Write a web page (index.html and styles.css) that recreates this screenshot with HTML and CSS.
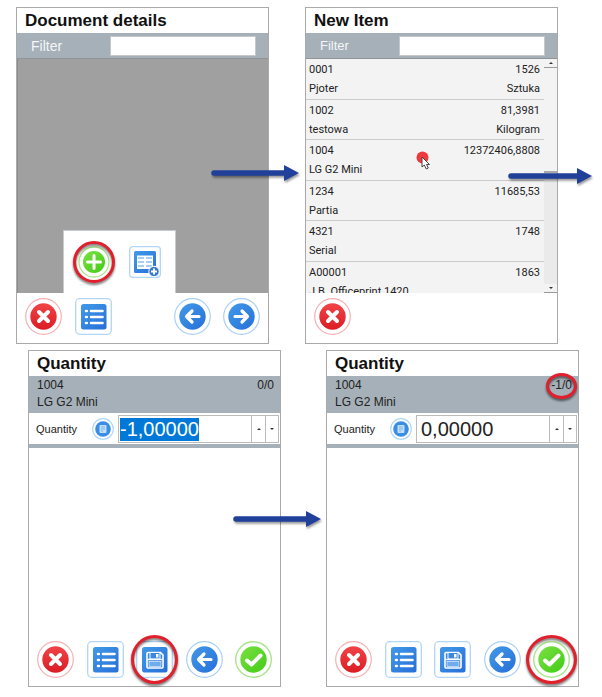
FILE: index.html
```html
<!DOCTYPE html>
<html lang="en">
<head>
<meta charset="utf-8">
<title>Adding an item to a document</title>
<link rel="stylesheet" href="styles.css">
</head>
<body>
<svg class="defs" aria-hidden="true">
  <defs>
    <linearGradient id="red" x1="0" y1="0" x2="0" y2="1"><stop offset="0" stop-color="#f04448"/><stop offset="1" stop-color="#dc1c24"/></linearGradient>
    <linearGradient id="blue" x1="0" y1="0" x2="1" y2="1"><stop offset="0" stop-color="#429ae8"/><stop offset="1" stop-color="#266fd8"/></linearGradient>
    <linearGradient id="green" x1="0" y1="0" x2="1" y2="1"><stop offset="0" stop-color="#7ce044"/><stop offset="1" stop-color="#40cc14"/></linearGradient>
    <symbol id="close" viewBox="0 0 37 37">
      <circle cx="18.500" cy="18.500" r="17.800" fill="#fff" stroke="#f5b0b2" stroke-width="1.200"/>
      <circle cx="18.500" cy="18.500" r="13.200" fill="url(#red)"/>
      <path d="M14 14l9 9M23 14l-9 9" stroke="#fff" stroke-width="4" stroke-linecap="round"/>
    </symbol>
    <symbol id="list" viewBox="0 0 37 37">
      <rect x=".7" y=".7" width="35.600" height="35.600" rx="4" fill="#fff" stroke="#b2d6f6" stroke-width="1.300"/>
      <rect x="6" y="6" width="25.500" height="25.500" rx="2.500" fill="url(#blue)"/>
      <path d="M16 13h11.500M16 19h11.500M16 25h11.500" stroke="#fff" stroke-width="2.600" stroke-linecap="round"/>
      <path d="M11 13h.8M11 19h.8M11 25h.8" stroke="#fff" stroke-width="2.600" stroke-linecap="round"/>
    </symbol>
    <symbol id="save" viewBox="0 0 37 37">
      <rect x=".7" y=".7" width="35.600" height="35.600" rx="4" fill="#fff" stroke="#b2d6f6" stroke-width="1.300"/>
      <rect x="6" y="6" width="25.500" height="25.500" rx="2.500" fill="url(#blue)"/>
      <path d="M12 11.500h12.500l2.500 2.500v12a1 1 0 0 1-1 1H12a1 1 0 0 1-1-1V12.500a1 1 0 0 1 1-1z" fill="none" stroke="#fff" stroke-width="1.600"/>
      <path d="M14 11.500h10v6.500h-10z" fill="#3a88e0" stroke="#fff"/>
      <path d="M20 13h2.500v3.500H20z" fill="#fff"/>
      <path d="M11.500 18.500h15" stroke="#fff" stroke-width="1.500"/>
      <rect x="13" y="20.500" width="12" height="5" fill="#6eacec" stroke="#fff" stroke-width=".6"/>
    </symbol>
    <symbol id="back" viewBox="0 0 37 37">
      <circle cx="18.500" cy="18.500" r="17.800" fill="#fff" stroke="#a9cff4" stroke-width="1.200"/>
      <circle cx="18.500" cy="18.500" r="13.200" fill="url(#blue)"/>
      <path d="M25 18.500H12.500M18 13l-5.500 5.500 5.500 5.500" fill="none" stroke="#fff" stroke-width="3.200" stroke-linecap="round" stroke-linejoin="round"/>
    </symbol>
    <symbol id="forward" viewBox="0 0 37 37">
      <circle cx="18.500" cy="18.500" r="17.800" fill="#fff" stroke="#a9cff4" stroke-width="1.200"/>
      <circle cx="18.500" cy="18.500" r="13.200" fill="url(#blue)"/>
      <path d="M12 18.500h12.500M19 13l5.500 5.500-5.500 5.500" fill="none" stroke="#fff" stroke-width="3.200" stroke-linecap="round" stroke-linejoin="round"/>
    </symbol>
    <symbol id="accept" viewBox="0 0 37 37">
      <circle cx="18.500" cy="18.500" r="17.800" fill="#fff" stroke="#a8e68c" stroke-width="1.400"/>
      <circle cx="18.500" cy="18.500" r="13.200" fill="url(#green)"/>
      <path d="M12 19.500l4.500 4 9-9" fill="none" stroke="#fff" stroke-width="4" stroke-linecap="round" stroke-linejoin="round"/>
    </symbol>
    <symbol id="add" viewBox="0 0 32 32">
      <circle cx="16" cy="16" r="15" fill="#fff" stroke="#a8e68c" stroke-width="1.300"/>
      <circle cx="16" cy="16" r="11" fill="url(#green)"/>
      <path d="M16 9.500v13M9.500 16h13" stroke="#fff" stroke-width="3" stroke-linecap="round"/>
    </symbol>
    <symbol id="sheet" viewBox="0 0 32 32">
      <rect x=".7" y=".7" width="30.600" height="30.600" rx="3" fill="#fff" stroke="#b2d6f6" stroke-width="1.300"/>
      <path d="M6.500 5h19A1.500 1.500 0 0 1 27 6.500V27H6.500A1.500 1.500 0 0 1 5 25.500v-19A1.500 1.500 0 0 1 6.500 5z" fill="url(#blue)"/>
      <path d="M8 9.500h16V23H8z" fill="#fff"/>
      <path d="M9 12h6M17 12h6M9 16h6M17 16h6M9 20h6M17 20h6" stroke="#8dbdf0" stroke-width="1.500"/>
      <circle cx="25" cy="25.500" r="5.200" fill="#2f78cc" stroke="#fff"/>
      <path d="M25 22.500v6M22 25.500h6" stroke="#fff" stroke-width="2"/>
    </symbol>
    <symbol id="pad" viewBox="0 0 22 22">
      <circle cx="11" cy="11" r="10.300" fill="#fff" stroke="#b2d8f8" stroke-width="1.200"/>
      <circle cx="11" cy="11" r="7.800" fill="#3a8de4"/>
      <rect x="7.500" y="7" width="7" height="8" rx="1" fill="#c4dff8"/>
      <path d="M9 9h4M9 11h4M9 13h2" stroke="#6aaaea" stroke-width=".8"/>
    </symbol>
    <symbol id="arrow" viewBox="0 0 88 18">
      <path d="M3 9h71" stroke="#21409a" stroke-width="5.500" stroke-linecap="round"/>
      <path d="M73 1l15 8-15 8z" fill="#21409a"/>
    </symbol>
    <symbol id="arrow-short" viewBox="0 0 84 18">
      <path d="M3 9h67" stroke="#21409a" stroke-width="5.500" stroke-linecap="round"/>
      <path d="M69 1l15 8-15 8z" fill="#21409a"/>
    </symbol>
  </defs>
</svg>

<main>
  <div class="row row-top">
    <section class="panel">
      <h2>Document details</h2>
      <div class="filter">
        <label for="doc-filter">Filter</label>
        <input id="doc-filter" type="text">
      </div>
      <div class="body empty">
        <div class="popup">
          <button type="button" aria-label="Add item"><svg class="icon-small"><use href="#add"/></svg><span class="ring ring-add"></span></button>
          <button type="button" aria-label="Add from list"><svg class="icon-small"><use href="#sheet"/></svg></button>
        </div>
      </div>
      <div class="toolbar">
        <button type="button" aria-label="Cancel"><svg class="icon"><use href="#close"/></svg></button>
        <button type="button" aria-label="Menu"><svg class="icon"><use href="#list"/></svg></button>
        <button type="button" class="fourth" aria-label="Back"><svg class="icon"><use href="#back"/></svg></button>
        <button type="button" aria-label="Next"><svg class="icon"><use href="#forward"/></svg></button>
      </div>
      <svg class="arrow arrow-first"><use href="#arrow"/></svg>
    </section>

    <section class="panel">
      <h2>New Item</h2>
      <div class="filter filter-small">
        <label for="item-filter">Filter</label>
        <input id="item-filter" type="text">
      </div>
      <div class="body items">
        <ul>
          <li><span>0001</span><span>1526</span><span>Pjoter</span><span>Sztuka</span></li>
          <li><span>1002</span><span>81,3981</span><span>testowa</span><span>Kilogram</span></li>
          <li><span>1004</span><span>12372406,8808</span><span>LG G2 Mini</span>
            <svg class="pointer" viewBox="0 0 16 20"><circle cx="6.500" cy="6.500" r="6" fill="#f0393f"/><path d="M6 6v10l2.300-2 2 4 2-1-1.800-3.500h3z" fill="#fff" stroke="#444"/></svg></li>
          <li><span>1234</span><span>11685,53</span><span>Partia</span></li>
          <li><span>4321</span><span>1748</span><span>Serial</span></li>
          <li><span>A00001</span><span>1863</span><span>J.B. Officeprint 1420</span></li>
        </ul>
        <div class="scrollbar">
          <button type="button" aria-label="Scroll up"><i class="up"></i></button>
          <div class="thumb"></div>
          <button type="button" aria-label="Scroll down"><i class="down"></i></button>
        </div>
      </div>
      <div class="toolbar">
        <button type="button" aria-label="Cancel"><svg class="icon"><use href="#close"/></svg></button>
      </div>
      <svg class="arrow arrow-second"><use href="#arrow-short"/></svg>
    </section>
  </div>

  <div class="row row-bottom">
    <section class="panel">
      <h2>Quantity</h2>
      <div class="info"><span>1004</span><span>0/0</span><span>LG G2 Mini</span></div>
      <div class="quantity">
        <label for="qty-before">Quantity</label>
        <button type="button" aria-label="Keypad"><svg class="icon-pad"><use href="#pad"/></svg></button>
        <div class="stepper">
          <input id="qty-before" type="text" value="-1,00000">
          <button type="button" aria-label="Increase"><i class="up"></i></button>
          <button type="button" aria-label="Decrease"><i class="down"></i></button>
        </div>
      </div>
      <div class="body"></div>
      <div class="toolbar">
        <button type="button" aria-label="Cancel"><svg class="icon"><use href="#close"/></svg></button>
        <button type="button" aria-label="Menu"><svg class="icon"><use href="#list"/></svg></button>
        <button type="button" aria-label="Save"><svg class="icon"><use href="#save"/></svg><span class="ring ring-save"></span></button>
        <button type="button" aria-label="Back"><svg class="icon"><use href="#back"/></svg></button>
        <button type="button" aria-label="Accept"><svg class="icon"><use href="#accept"/></svg></button>
      </div>
      <svg class="arrow arrow-third"><use href="#arrow"/></svg>
    </section>

    <section class="panel">
      <h2>Quantity</h2>
      <div class="info"><span>1004</span><span class="marked">-1/0<span class="ring ring-count"></span></span><span>LG G2 Mini</span></div>
      <div class="quantity">
        <label for="qty-after">Quantity</label>
        <button type="button" aria-label="Keypad"><svg class="icon-pad"><use href="#pad"/></svg></button>
        <div class="stepper">
          <input id="qty-after" type="text" value="0,00000">
          <button type="button" aria-label="Increase"><i class="up"></i></button>
          <button type="button" aria-label="Decrease"><i class="down"></i></button>
        </div>
      </div>
      <div class="body"></div>
      <div class="toolbar">
        <button type="button" aria-label="Cancel"><svg class="icon"><use href="#close"/></svg></button>
        <button type="button" aria-label="Menu"><svg class="icon"><use href="#list"/></svg></button>
        <button type="button" aria-label="Save"><svg class="icon"><use href="#save"/></svg></button>
        <button type="button" aria-label="Back"><svg class="icon"><use href="#back"/></svg></button>
        <button type="button" aria-label="Accept"><svg class="icon"><use href="#accept"/></svg><span class="ring ring-accept"></span></button>
      </div>
    </section>
  </div>
</main>
<script src="script.js"></script>
</body>
</html>
```
FILE: styles.css
```css
* { box-sizing: border-box; }

body {
  margin: 0;
  background: #fff;
  color: #222;
  font-family: "Liberation Sans", Arial, sans-serif;
}

.defs { position: absolute; width: 0; height: 0; }

main {
  display: flex;
  flex-direction: column;
  gap: 6px;
  padding: 7px 0;
}

.row { display: flex; }
.row-top { gap: 36px; padding: 0 44px 0 16px; }
.row-bottom { gap: 45px; padding: 0 23px 0 28px; }

.panel {
  position: relative;
  flex: 1;
  min-width: 0;
  display: flex;
  flex-direction: column;
  border: 1px solid #aaa;
  background: #fff;
}

h2 {
  margin: 0;
  padding: 0 8px;
  font-size: 17px;
  line-height: 25px;
  color: #111;
}

button {
  position: relative;
  display: block;
  padding: 0;
  border: 0;
  background: none;
}

input {
  min-width: 0;
  font-family: inherit;
  border: 1px solid #bbb;
  border-radius: 0;
  background: #fff;
  outline: 0;
}

svg { display: block; }

.filter {
  display: flex;
  align-items: center;
  justify-content: space-between;
  height: 26px;
  padding: 0 12px 0 14px;
  background: #a6b0b8;
  border-bottom: 1px solid #909496;
  color: #f4f6f8;
  font-size: 14px;
}
.filter-small { font-size: 13px; }
.filter input { width: 65%; height: 20px; border-color: #c4c8cb; }

.body { position: relative; min-height: 234px; }
.row-bottom .body { min-height: 188px; }
.empty { background: #a0a0a0; border-left: 1px solid #8c8c8c; }

.popup {
  position: absolute;
  left: 45px;
  bottom: 0;
  display: flex;
  gap: 19px;
  padding: 15px 14px;
  border: 1px solid #c4ccd2;
  border-bottom: 0;
  background: #fff;
}

.toolbar {
  display: grid;
  grid-template-columns: repeat(5, 37px);
  justify-content: space-between;
  padding: 5px 8px 8px;
}
.fourth { grid-column: 4; }
.icon { width: 37px; height: 37px; }
.icon-small { width: 32px; height: 32px; }
.icon-pad { width: 22px; height: 22px; }

.items { display: flex; height: 234px; overflow: hidden; background: #f3f3f3; }
ul {
  flex: 1;
  display: grid;
  grid-template-rows: repeat(6, 1fr);
  height: 243px;
  margin: 0;
  padding: 0;
  list-style: none;
  font: 11px Roboto, sans-serif;
}
li {
  position: relative;
  display: grid;
  grid-template-columns: auto auto;
  justify-content: space-between;
  padding: 1px 4px 0 3px;
  border-bottom: 1px solid #ccc;
  line-height: 19px;
}
li span:nth-child(even) { text-align: right; }
.pointer { position: absolute; left: 110px; top: 11px; width: 16px; height: 20px; }

.scrollbar {
  display: flex;
  flex-direction: column;
  width: 13px;
  background: #eaeaea;
}
.scrollbar button { height: 9px; background: #f3f3f3; border-bottom: 1px solid #999; }
.thumb { flex: 1; background: linear-gradient(#f3f3f3 103px, #aaa 103px, #aaa 105px, #eaeaea 105px); }

.up, .down {
  display: block;
  width: 4px;
  margin: auto;
  border: 2px solid transparent;
  border-bottom-color: #333;
  border-top: 0;
}
.down { border-top: 2px solid #333; border-bottom: 0; }

.info {
  display: grid;
  grid-template-columns: 1fr auto;
  padding: 1px 6px 2px 8px;
  background: #a6b0b8;
  font-size: 12px;
  line-height: 17px;
}
.marked { position: relative; }

.quantity {
  display: grid;
  grid-template-columns: 56px 22px 1fr;
  align-items: center;
  height: 35px;
  padding: 2px 1px 1px 7px;
  border-bottom: 4px solid #a6b0b8;
  font-size: 11px;
}
.stepper {
  display: grid;
  grid-template-columns: 1fr 14px 13px;
  height: 28px;
  margin-left: 4px;
  border: 1px solid #bbb;
}
.stepper input { width: 100%; padding: 0 0 0 1px; border: 0; font-size: 20px; color: #222; }
#qty-after { padding-left: 4px; }
.stepper button { border-left: 1px solid #bbb; }
::selection { background: #0078d7; color: #fff; }

.ring {
  position: absolute;
  border: 3px solid #e0202c;
  border-radius: 50%;
  filter: drop-shadow(0 2px 1px #0008);
}
.ring-add { inset: -5px; }
.ring-save { inset: -6px -5px; }
.ring-accept { inset: -6px -7px; }
.ring-count { inset: -4px -5px -5px -5px; }

.arrow {
  position: absolute;
  z-index: 1;
  width: 88px;
  height: 18px;
  filter: drop-shadow(1px 2px 1px #0006);
}
.arrow-first { right: -31px; top: 156px; }
.arrow-second { right: -35px; top: 159px; width: 84px; }
.arrow-third { right: -41px; top: 159px; }
```
FILE: script.js
```js
const quantity = document.getElementById('qty-before');
quantity.focus();
quantity.select();
```
